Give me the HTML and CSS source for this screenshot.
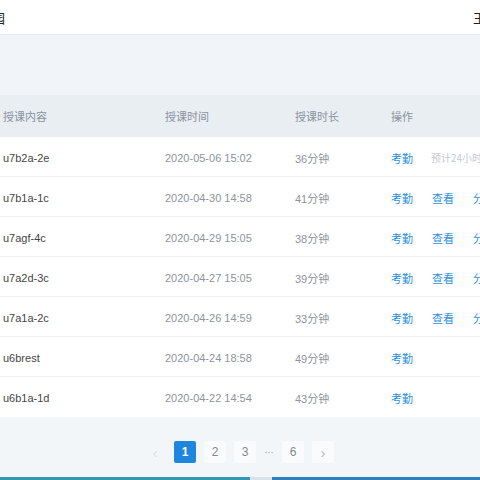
FILE: index.html
```html
<!DOCTYPE html>
<html>
<head>
<meta charset="utf-8">
<link rel="stylesheet" href="styles.css">
</head>
<body>
<div class="page">
  <header class="topbar">
    <span class="brand">园</span>
    <span class="user">王</span>
  </header>
  <div class="spacer"></div>
  <div class="table">
    <div class="row head">
      <div>授课内容</div><div>授课时间</div><div>授课时长</div><div>操作</div>
    </div>
    <div class="row">
      <div class="name">u7b2a-2e</div><div class="muted">2020-05-06 15:02</div><div class="muted">36分钟</div>
      <div class="ops"><a>考勤</a><span class="hint">预计24小时后生成</span></div>
    </div>
    <div class="row">
      <div class="name">u7b1a-1c</div><div class="muted">2020-04-30 14:58</div><div class="muted">41分钟</div>
      <div class="ops"><a>考勤</a><a>查看</a><a>分享</a></div>
    </div>
    <div class="row">
      <div class="name">u7agf-4c</div><div class="muted">2020-04-29 15:05</div><div class="muted">38分钟</div>
      <div class="ops"><a>考勤</a><a>查看</a><a>分享</a></div>
    </div>
    <div class="row">
      <div class="name">u7a2d-3c</div><div class="muted">2020-04-27 15:05</div><div class="muted">39分钟</div>
      <div class="ops"><a>考勤</a><a>查看</a><a>分享</a></div>
    </div>
    <div class="row">
      <div class="name">u7a1a-2c</div><div class="muted">2020-04-26 14:59</div><div class="muted">33分钟</div>
      <div class="ops"><a>考勤</a><a>查看</a><a>分享</a></div>
    </div>
    <div class="row">
      <div class="name">u6brest</div><div class="muted">2020-04-24 18:58</div><div class="muted">49分钟</div>
      <div class="ops"><a>考勤</a></div>
    </div>
    <div class="row last">
      <div class="name">u6b1a-1d</div><div class="muted">2020-04-22 14:54</div><div class="muted">43分钟</div>
      <div class="ops"><a>考勤</a></div>
    </div>
  </div>
  <div class="pager">
    <span class="pg arrow dim">‹</span>
    <span class="pg active">1</span>
    <span class="pg">2</span>
    <span class="pg">3</span>
    <span class="dots">…</span>
    <span class="pg">6</span>
    <span class="pg arrow">›</span>
  </div>
  <div class="taskbar"><span class="seg1"></span><span class="seg2"></span><span class="seg3"></span></div>
</div>
</body>
</html>
```
FILE: styles.css
```css
html, body {
  margin: 0;
  padding: 0;
}
body {
  font-family: "Noto Sans CJK SC", "Liberation Sans", sans-serif;
  font-size: 11px;
  background: #f3f6f9;
  color: #555;
}
.page {
  width: 480px;
  height: 480px;
  display: flex;
  flex-direction: column;
  overflow: hidden;
}
.topbar {
  height: 34px;
  background: #fff;
  border-bottom: 1px solid #e6e9ed;
  display: flex;
  align-items: center;
  justify-content: space-between;
  font-size: 13px;
  color: #222;
}
.brand {
  margin-left: -8px;
}
.user {
  margin-right: -6px;
}
.spacer {
  height: 60px;
  background: #f1f5f9;
}
.table {
  display: flex;
  flex-direction: column;
}
.row {
  display: grid;
  grid-template-columns: 162px 130px 96px 1fr;
  align-items: center;
  height: 40px;
  padding-left: 3px;
  padding-top: 2px;
  background: #fff;
  border-bottom: 1px solid #eff1f4;
  box-sizing: border-box;
  white-space: nowrap;
}
.row.head {
  height: 42px;
  padding-top: 0;
  background: #e9eef3;
  color: #8a949e;
  border-bottom: none;
}
.row.last {
  border-bottom: none;
}
.name {
  color: #444;
  font-family: "Liberation Sans", "Noto Sans CJK SC", sans-serif;
}
.muted {
  color: #8d949b;
  font-family: "Liberation Sans", "Noto Sans CJK SC", sans-serif;
}
.ops {
  display: flex;
  gap: 19px;
  overflow: hidden;
}
.ops a {
  color: #2d8fdb;
}
.hint {
  color: #c5cad0;
  font-size: 10px;
  margin-left: -1px;
}
.pager {
  flex: 1;
  display: flex;
  align-items: center;
  justify-content: flex-start;
  padding-left: 144px;
  gap: 8px;
  background: #f3f6f9;
  padding-top: 10px;
}
.pg {
  width: 22px;
  height: 22px;
  display: flex;
  align-items: center;
  justify-content: center;
  background: #fafbfd;
  color: #888;
  font-family: "Liberation Sans", sans-serif;
  font-size: 12px;
  border-radius: 2px;
}
.pg.active {
  background: #1f86e0;
  color: #fff;
  font-weight: bold;
}
.arrow {
  font-size: 15px;
  color: #b4bac1;
}
.arrow.dim {
  color: #dde1e5;
  background: transparent;
}
.dots {
  width: 10px;
  color: #999;
  font-size: 9px;
  text-align: center;
}
.taskbar {
  height: 3px;
  display: flex;
}
.seg1 {
  width: 250px;
  background: #3595b4;
}
.seg2 {
  width: 22px;
  background: #d8e4ea;
}
.seg3 {
  flex: 1;
  background: #2c80bf;
}
```
